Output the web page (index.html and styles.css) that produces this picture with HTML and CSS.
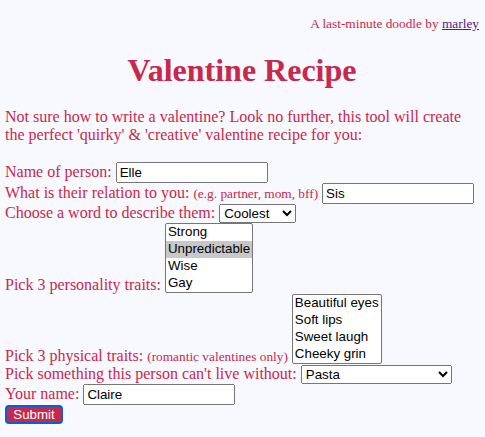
FILE: index.html
```html
<!DOCTYPE html>
<html>
<head>
<meta charset="utf-8">
<link rel="stylesheet" href="styles.css">
</head>
<body>
<p class="credit">A last-minute doodle by <a href="#">marley</a></p>
<h1 class="title">Valentine Recipe</h1>
<p class="intro">Not sure how to write a valentine? Look no further, this tool will create the perfect 'quirky' &amp; 'creative' valentine recipe for you:</p>
<form class="form">
  <label>Name of person: <input type="text" value="Elle"></label><br>
  <label>What is their relation to you: <small>(e.g. partner, mom, bff)</small> <input type="text" value="Sis"></label><br>
  <label>Choose a word to describe them: <select><option>Coolest</option><option>Sweetest</option></select></label><br>
  <label>Pick 3 personality traits: <select multiple size="4"><option>Strong</option><option selected>Unpredictable</option><option>Wise</option><option>Gay</option></select></label><br>
  <label>Pick 3 physical traits: <small>(romantic valentines only)</small> <select multiple size="4"><option>Beautiful eyes</option><option>Soft lips</option><option>Sweet laugh</option><option>Cheeky grin</option></select></label><br>
  <label>Pick something this person can't live without: <select class="wide"><option>Pasta</option></select></label><br>
  <label>Your name: <input type="text" value="Claire"></label><br>
  <button type="button" class="submit">Submit</button>
</form>
</body>
</html>
```
FILE: styles.css
```css
html { background: #f8f8ff; }
body {
  margin: 8px 6px 8px 5px;
  font-family: "Liberation Serif", "Times New Roman", serif;
  font-size: 16px;
  color: #c8284b;
}
.credit {
  text-align: right;
  font-size: 13.33px;
  margin: 8px 0 16px;
}
.credit a { color: #551a8b; }
.title {
  text-align: center;
  font-size: 32px;
  margin: 20px 0 19px;
}
.intro { margin: 16px 0 18px; }
.form small { font-size: 13.33px; }
.form input, .form select, .form button {
  font-family: Arial, "Liberation Sans", sans-serif;
  font-size: 13.33px;
}
.form input {
  box-sizing: border-box;
  width: 152px;
  height: 21px;
}
.form select.wide { width: 151px; }
.form select[multiple] { overflow: hidden; }
.form select[multiple] option:checked { background: #c8c8c8; color: #000; }
.submit {
  background: #c8284b;
  color: #fff;
  border: 2px solid #0a5fd1;
  border-radius: 4px;
  padding: 0 6px;
  height: 19px;
  width: 58px;
  font-size: 13.33px;
}
```
